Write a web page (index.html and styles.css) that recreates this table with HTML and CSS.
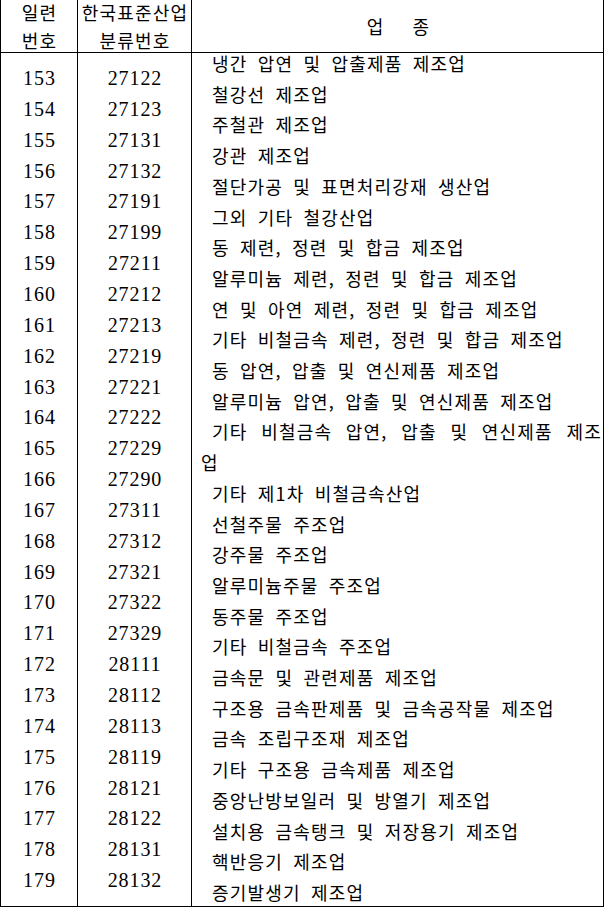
FILE: index.html
```html
<!DOCTYPE html>
<html lang="ko">
<head>
<meta charset="utf-8">
<title>업종 분류표</title>
<link rel="stylesheet" href="styles.css">
</head>
<body>
<div class="sheet">
  <div class="cell head first">
    <div>일련</div>
    <div>번호</div>
  </div>
  <div class="cell head">
    <div>한국표준산업</div>
    <div>분류번호</div>
  </div>
  <div class="cell head title">
    <span>업</span><span>종</span>
  </div>

  <div class="cell body first nums">
    <div>153</div><div>154</div><div>155</div><div>156</div><div>157</div><div>158</div><div>159</div>
    <div>160</div><div>161</div><div>162</div><div>163</div><div>164</div><div>165</div><div>166</div>
    <div>167</div><div>168</div><div>169</div><div>170</div><div>171</div><div>172</div><div>173</div>
    <div>174</div><div>175</div><div>176</div><div>177</div><div>178</div><div>179</div>
  </div>
  <div class="cell body nums">
    <div>27122</div><div>27123</div><div>27131</div><div>27132</div><div>27191</div><div>27199</div>
    <div>27211</div><div>27212</div><div>27213</div><div>27219</div><div>27221</div><div>27222</div>
    <div>27229</div><div>27290</div><div>27311</div><div>27312</div><div>27321</div><div>27322</div>
    <div>27329</div><div>28111</div><div>28112</div><div>28113</div><div>28119</div><div>28121</div>
    <div>28122</div><div>28131</div><div>28132</div>
  </div>
  <div class="cell body names">
    <div class="list">
      <div class="item">냉간 압연 및 압출제품 제조업</div>
      <div class="item">철강선 제조업</div>
      <div class="item">주철관 제조업</div>
      <div class="item">강관 제조업</div>
      <div class="item">절단가공 및 표면처리강재 생산업</div>
      <div class="item">그외 기타 철강산업</div>
      <div class="item">동 제련, 정련 및 합금 제조업</div>
      <div class="item">알루미늄 제련, 정련 및 합금 제조업</div>
      <div class="item">연 및 아연 제련, 정련 및 합금 제조업</div>
      <div class="item">기타 비철금속 제련, 정련 및 합금 제조업</div>
      <div class="item">동 압연, 압출 및 연신제품 제조업</div>
      <div class="item">알루미늄 압연, 압출 및 연신제품 제조업</div>
      <div class="item justified">기타 비철금속 압연, 압출 및 연신제품 제조</div>
      <div class="cont">업</div>
      <div class="item">기타 제1차 비철금속산업</div>
      <div class="item">선철주물 주조업</div>
      <div class="item">강주물 주조업</div>
      <div class="item">알루미늄주물 주조업</div>
      <div class="item">동주물 주조업</div>
      <div class="item">기타 비철금속 주조업</div>
      <div class="item">금속문 및 관련제품 제조업</div>
      <div class="item">구조용 금속판제품 및 금속공작물 제조업</div>
      <div class="item">금속 조립구조재 제조업</div>
      <div class="item">기타 구조용 금속제품 제조업</div>
      <div class="item">중앙난방보일러 및 방열기 제조업</div>
      <div class="item">설치용 금속탱크 및 저장용기 제조업</div>
      <div class="item">핵반응기 제조업</div>
      <div class="item">증기발생기 제조업</div>
    </div>
  </div>
</div>
</body>
</html>
```
FILE: styles.css
```css
html, body {
  margin: 0;
  padding: 0;
  background: #fff;
  overflow: hidden;
}

.sheet {
  display: grid;
  grid-template-columns: 78px 114px 412px;
  grid-template-rows: 53px 854px;
  width: 604px;
  color: #000;
  font-family: "Noto Sans CJK KR", "Noto Sans", sans-serif;
  font-size: 18px;
  letter-spacing: 1.2px;
  word-spacing: 4px;
}

.cell {
  box-sizing: border-box;
  border-right: 1px solid #000;
  border-bottom: 1px solid #000;
  min-width: 0;
}

.first {
  border-left: 1px solid #000;
}

.head {
  display: flex;
  flex-direction: column;
  justify-content: center;
  align-items: center;
  line-height: 28px;
  white-space: nowrap;
  padding-left: 1.2px;
}

.head.title {
  flex-direction: row;
  gap: 28px;
  padding-left: 2px;
}

.body {
  line-height: 30.85px;
}

.nums {
  display: flex;
  flex-direction: column;
  justify-content: center;
  align-items: center;
  font-family: "Liberation Serif", "Noto Sans CJK KR", serif;
  font-size: 20px;
  letter-spacing: 0.9px;
  word-spacing: 0;
  padding-left: 0.9px;
}

.names {
  padding-left: 9px;
  padding-right: 1px;
  line-height: 30.7px;
}

.list {
  margin-top: -5px;
}

.item {
  text-indent: 11px;
  white-space: nowrap;
}

.item.justified {
  text-align: justify;
  text-align-last: justify;
  text-justify: inter-word;
}

.cont {
  white-space: nowrap;
}
```
